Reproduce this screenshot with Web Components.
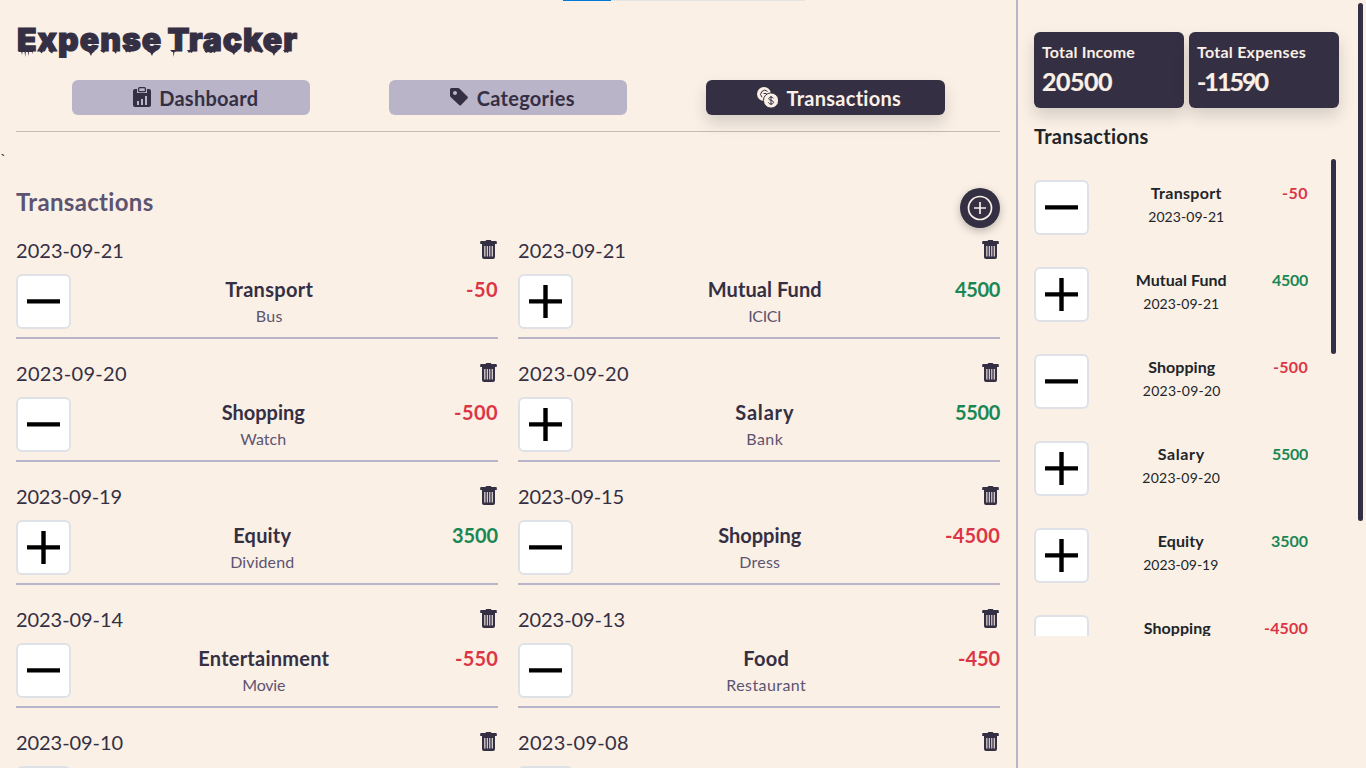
<!DOCTYPE html>
<html lang="en">
<head>
<meta charset="utf-8">
<title>Expense Tracker</title>
<style>
html,body{margin:0;height:100%;overflow:hidden}
body{background:#faf0e6;color:#352f44;font-family:Lato,"Open Sans",sans-serif;font-size:16px;line-height:1.5}
</style>
</head>
<body>
<expense-app></expense-app>
<script>
const define = (name, render, after) => customElements.define(name, class extends HTMLElement {
  connectedCallback() {
    if (this.shadowRoot) return;
    this.attachShadow({ mode: 'open' }).innerHTML = render(this);
    if (after) after(this);
  }
});
const attr = (el, n) => el.getAttribute(n) || '';

/* A label whose tracking is adjusted so that it takes w pixels. */
define('fit-text', () => `<style>:host{display:inline-block;white-space:nowrap}span{display:inline-block}</style><span><slot></slot></span>`, el => {
  const span = el.shadowRoot.querySelector('span');
  const w = +attr(el, 'w'), n = el.textContent.length;
  const natural = span.getBoundingClientRect().width;
  if (w && natural) {
    span.style.letterSpacing = ((w - natural) / n).toFixed(3) + 'px';
  }
});

const icons = {
  dashboard: ['0 0 18 20', 18, 20, '<path fill="currentColor" fill-rule="evenodd" d="M2 2h2v4h10V2h2q2 0 2 2v14q0 2-2 2H2q-2 0-2-2V4q0-2 2-2ZM4 14v4h2v-4Zm4-2v6h2v-6Zm4-3v9h2V9Z"/><rect x="5.6" y=".7" width="6.8" height="4" rx="1" fill="none" stroke="currentColor" stroke-width="1.3"/>'],
  tag: ['0 0 18 18', 18, 18, '<path fill="currentColor" fill-rule="evenodd" d="M1.5 0H8q.8 0 1.4.6l8 8q1 1 0 2l-6.3 6.5q-1 1-2 0L.6 9Q0 8.4 0 7.6V1.5Q0 0 1.5 0ZM5 3a2 2 0 1 0 .01 0Z"/>'],
  coins: ['0 0 21 21', 21, 21, '<circle cx="7" cy="7" r="7" fill="currentColor"/><path d="M10.500 4.400A3.900 3.900 0 1 0 5 10.200M6.500 6.500h3" fill="none" stroke="#352f44" stroke-width="1"/><circle cx="14" cy="13.5" r="7.6" fill="currentColor" stroke="#352f44" stroke-width="1"/><path d="M16.3 11.4c-.4-1-1.2-1.3-2.3-1.3-1.3 0-2.2.6-2.2 1.6 0 2.2 4.7 1.2 4.7 3.6 0 1.1-1 1.7-2.4 1.7-1.3 0-2.3-.5-2.6-1.6M14 9v9" fill="none" stroke="#352f44" stroke-width="1"/>'],
  trash: ['0 0 17 19', 17, 19, '<path fill="currentColor" fill-rule="evenodd" d="M6.5 0h4q.7 0 .9 1H16q.8 0 .8 1v2H15v13q0 2-2 2H4q-2 0-2-2V4H.2V2q0-1 .8-1h4.6q.2-1 .9-1ZM4.3 6v10.5h1.1V6Zm2.5 0v10.5h1V6Zm2.5 0v10.5h1V6Zm2.4 0v10.5h1.1V6Z"/>'],
  add: ['0 0 26 26', 26, 26, '<circle cx="13" cy="13" r="11.5" fill="none" stroke="currentColor" stroke-width="1.7"/><path d="M13 7v12M7 13h12" stroke="currentColor" stroke-width="1.7"/>']
};
define('app-icon', el => {
  const [box, w, h, body] = icons[attr(el, 'name')];
  return `<style>:host{display:block;flex:none}svg{display:block}</style><svg viewBox="${box}" width="${w}" height="${h}">${body}</svg>`;
});

define('sign-box', el => `<style>:host{display:block;flex:none;box-sizing:border-box;width:55px;height:55px;border:2px solid #dee2e6;border-radius:6px;background:#fff}svg{display:block}</style>
<svg width="51" height="51" viewBox="0 0 51 51"><path d="M9 25.4h33${attr(el, 'kind') === 'plus' ? 'M25.5 9v33' : ''}" stroke="#000" stroke-width="4.4"/></svg>`);

define('nav-button', el => `<style>
:host{display:flex;box-sizing:border-box;width:238px;height:35px;align-items:center;justify-content:center;gap:8.5px;padding-left:9px;border-radius:6px;background:#b9b4c7;color:#352f44;font-size:20px;font-weight:700;line-height:30px}
:host([active]){width:239px;padding-left:7px;background:#352f44;color:#faf0e6;box-shadow:0 8px 16px rgba(0,0,0,.15)}
app-icon{margin-bottom:1px}
</style><app-icon name="${attr(el, 'icon')}"></app-icon><fit-text w="${attr(el, 'w')}">${attr(el, 'label')}</fit-text>`);

define('page-title', () => `<style>
:host{display:block;position:relative;height:48px;box-sizing:border-box;font:900 32px/48px Inter,sans-serif;color:#352f44;-webkit-text-stroke:1.2px #352f44}
fit-text{padding-left:1px;word-spacing:-2px}
svg{position:absolute;left:0;top:34px}
</style><fit-text w="281">Expense Tracker</fit-text>
<svg width="284" height="10" viewBox="0 0 284 10" fill="#352f44"><path d="M2 0h15l-.5 4-.6-2-3 0-.5 4-.6-4-2 0-.6 5-.6-5-2 0-.6 3-.6-3-2 0ZM23 0h5l-2.500 3.500ZM32 0h6l-2 3.500-2-1.500ZM71 1h8l-3 2.500-1 2.500-1.500-3ZM84 0h6l-2 3-2-1ZM96 0h5l-1 4-1.500-2ZM109 0h7l-2 2.500-2-1-2 1ZM131 1h9l-3 2.500-1 2.500-1.500-3ZM154 0h7l-2 2-.6 0-.7 5-.7-5-1 0ZM171 0h6l-1 3-2-1-1 1ZM188 0h12l-1 3-2-1-2 1-3-1-2 1ZM213 1h9l-3 2-1 2-1.500-2ZM229 0h6l-2 3-2-1ZM240 0h7l-1 3-3-1ZM253 1h9l-3 2.500-1 2.500-1.500-3ZM267 0h6l-1 3-2-1-1 1Z"/></svg>`);

define('transaction-item', el => `<style>
:host{display:block;border-bottom:2px solid #b9b4c7;padding-bottom:8px}
.top{display:flex;justify-content:space-between;height:30px;margin-bottom:8px;font-size:20px;line-height:29px}
app-icon{margin:4px 1.3px 0 0}
.row{display:flex;justify-content:space-between;height:55px}
.mid{display:flex;flex-direction:column;align-items:center;padding-left:1.5px}
.name,.amount{font-size:20px;line-height:31px;height:30px;font-weight:700}
.note{font-size:16px;line-height:23px;height:24px;color:#5c5470}
.amount{color:#dc3545}.plus{color:#198754}
</style>
<div class="top"><fit-text w="${attr(el, 'dw')}">${attr(el, 'date')}</fit-text><app-icon name="trash"></app-icon></div>
<div class="row"><sign-box kind="${attr(el, 'kind')}"></sign-box>
${attr(el, 'name') ? `<div class="mid"><fit-text class="name" w="${attr(el, 'nw')}">${attr(el, 'name')}</fit-text><fit-text class="note" w="${attr(el, 'sw')}">${attr(el, 'note')}</fit-text></div>
<fit-text class="amount ${attr(el, 'kind')}" w="${attr(el, 'aw')}">${attr(el, 'amount')}</fit-text>` : ''}</div>`);

define('recent-item', el => `<style>
:host{display:flex;justify-content:space-between;height:55px;color:#212529}
.mid{display:flex;flex-direction:column;align-items:center;padding-left:1.5px}
.name,.amount{font-size:16px;line-height:25px;height:25px;font-weight:700}
.date{font-size:14px;line-height:24px;height:22px}
.amount{color:#dc3545}.plus{color:#198754}
</style><sign-box kind="${attr(el, 'kind')}"></sign-box>
<div class="mid"><fit-text class="name" w="${attr(el, 'nw')}">${attr(el, 'name')}</fit-text>${attr(el, 'date') ? `<fit-text class="date" w="${attr(el, 'dw')}">${attr(el, 'date')}</fit-text>` : ''}</div>
<fit-text class="amount ${attr(el, 'kind')}" w="${attr(el, 'aw')}">${attr(el, 'amount')}</fit-text>`);

define('total-card', el => `<style>
:host{display:flex;flex-direction:column;align-items:flex-start;box-sizing:border-box;width:150px;height:76px;padding:8px;border-radius:6px;background:#352f44;color:#faf0e6;font-weight:700;box-shadow:0 8px 16px rgba(0,0,0,.15)}
.label{font-size:16px;line-height:24px;height:24px}.value{font-size:25px;line-height:35px;height:36px;-webkit-text-stroke:.2px currentColor}
</style><fit-text class="label" w="${attr(el, 'lw')}">${attr(el, 'label')}</fit-text><fit-text class="value" w="${attr(el, 'vw')}">${attr(el, 'value')}</fit-text>`);

const transactions = [
  ['2023-09-21', 108, 'minus', 'Transport', 88, 'Bus', 27, '-50', 32],
  ['2023-09-21', 108, 'plus', 'Mutual Fund', 114, 'ICICI', 33, '4500', 45],
  ['2023-09-20', 111, 'minus', 'Shopping', 83, 'Watch', 46, '-500', 44],
  ['2023-09-20', 111, 'plus', 'Salary', 59, 'Bank', 37, '5500', 45],
  ['2023-09-19', 106, 'plus', 'Equity', 58, 'Dividend', 64, '3500', 46],
  ['2023-09-15', 106, 'minus', 'Shopping', 83, 'Dress', 41, '-4500', 55],
  ['2023-09-14', 107, 'minus', 'Entertainment', 131, 'Movie', 43, '-550', 43],
  ['2023-09-13', 107, 'minus', 'Food', 46, 'Restaurant', 80, '-450', 42],
  ['2023-09-10', 107, 'minus', '', 0, '', 0, '', 0],
  ['2023-09-08', 111, 'minus', '', 0, '', 0, '', 0]
];
const recent = [
  ['minus', 'Transport', 71, '2023-09-21', 76, '-50', 26],
  ['plus', 'Mutual Fund', 91, '2023-09-21', 76, '4500', 36],
  ['minus', 'Shopping', 67, '2023-09-20', 78, '-500', 35],
  ['plus', 'Salary', 47, '2023-09-20', 78, '5500', 36],
  ['plus', 'Equity', 46, '2023-09-19', 75, '3500', 37],
  ['minus', 'Shopping', 67, '', 0, '-4500', 44]
];

define('main-panel', () => `<style>
:host{display:block;width:1016px;height:768px;overflow:hidden;box-sizing:border-box}
header{margin:0 16px;padding-top:16px;height:131px;box-sizing:border-box}
nav{display:flex;gap:79px;margin-top:16px;padding-left:56px}
hr{margin:0 16px;border:0;height:1px;background:#c5bcb8}
.tick{font-size:16px;line-height:24px;height:24px;margin-top:15px}
.head{display:flex;justify-content:space-between;height:48px;margin:17px 16px 0;color:#5c5470;font-size:24px;line-height:28px;font-weight:700}
.add{display:flex;align-items:center;justify-content:center;width:40px;height:40px;border-radius:50%;background:#352f44;color:#faf0e6;box-shadow:0 3px 8px rgba(0,0,0,.25)}
.grid{display:grid;grid-template-columns:482px 482px;gap:20px;margin:0 16px}
</style>
<header><page-title></page-title><nav>
<nav-button icon="dashboard" label="Dashboard" w="99"></nav-button>
<nav-button icon="tag" label="Categories" w="98"></nav-button>
<nav-button active icon="coins" label="Transactions" w="115"></nav-button></nav></header>
<hr><div class="tick">\`</div>
<div class="head"><fit-text w="138">Transactions</fit-text><div class="add"><app-icon name="add"></app-icon></div></div>
<div class="grid">${transactions.map(([d, dw, k, n, nw, s, sw, a, aw]) => `<transaction-item date="${d}" dw="${dw}" kind="${k}" name="${n}" nw="${nw}" note="${s}" sw="${sw}" amount="${a}" aw="${aw}"></transaction-item>`).join('')}</div>`);

define('side-panel', () => `<style>
:host{display:flex;box-sizing:border-box;width:350px;height:768px;border-left:2px solid #b9b4c7;padding-left:16px}
.body{width:305px;padding-top:32px}
.cards{display:flex;gap:5px}
.title{margin-top:14px;height:37px;font-size:20px;line-height:28px;font-weight:700;color:#212529}
.scroll{display:flex;justify-content:space-between;height:477px;padding-right:3px}
.list{width:274px;height:477px;overflow:hidden;box-sizing:border-box;padding-top:21px;display:flex;flex-direction:column;gap:32px}
recent-item{flex:none}
.bar{width:5px;height:195px;border-radius:3px;background:#352f44}
.outer{height:518px;margin:3px 0 0 19px}
</style><div class="body"><div class="cards"><total-card label="Total Income" lw="93" value="20500" vw="70"></total-card><total-card label="Total Expenses" lw="109" value="-11590" vw="70"></total-card></div>
<div class="title"><fit-text w="115">Transactions</fit-text></div>
<div class="scroll"><div class="list">${recent.map(([k, n, nw, d, dw, a, aw]) => `<recent-item kind="${k}" name="${n}" nw="${nw}" date="${d}" dw="${dw}" amount="${a}" aw="${aw}"></recent-item>`).join('')}</div><div class="bar"></div></div></div>
<div class="bar outer"></div>`);

define('expense-app', () => `<style>
:host{display:flex;width:1366px;height:768px;position:relative;overflow:hidden}
.progress{position:absolute;left:563px;top:0;width:242px;height:1px;background:linear-gradient(90deg,#0078d7 48px,#e5e5e5 48px)}
</style><main-panel></main-panel><side-panel></side-panel><div class="progress"></div>`);
</script>
</body>
</html>
